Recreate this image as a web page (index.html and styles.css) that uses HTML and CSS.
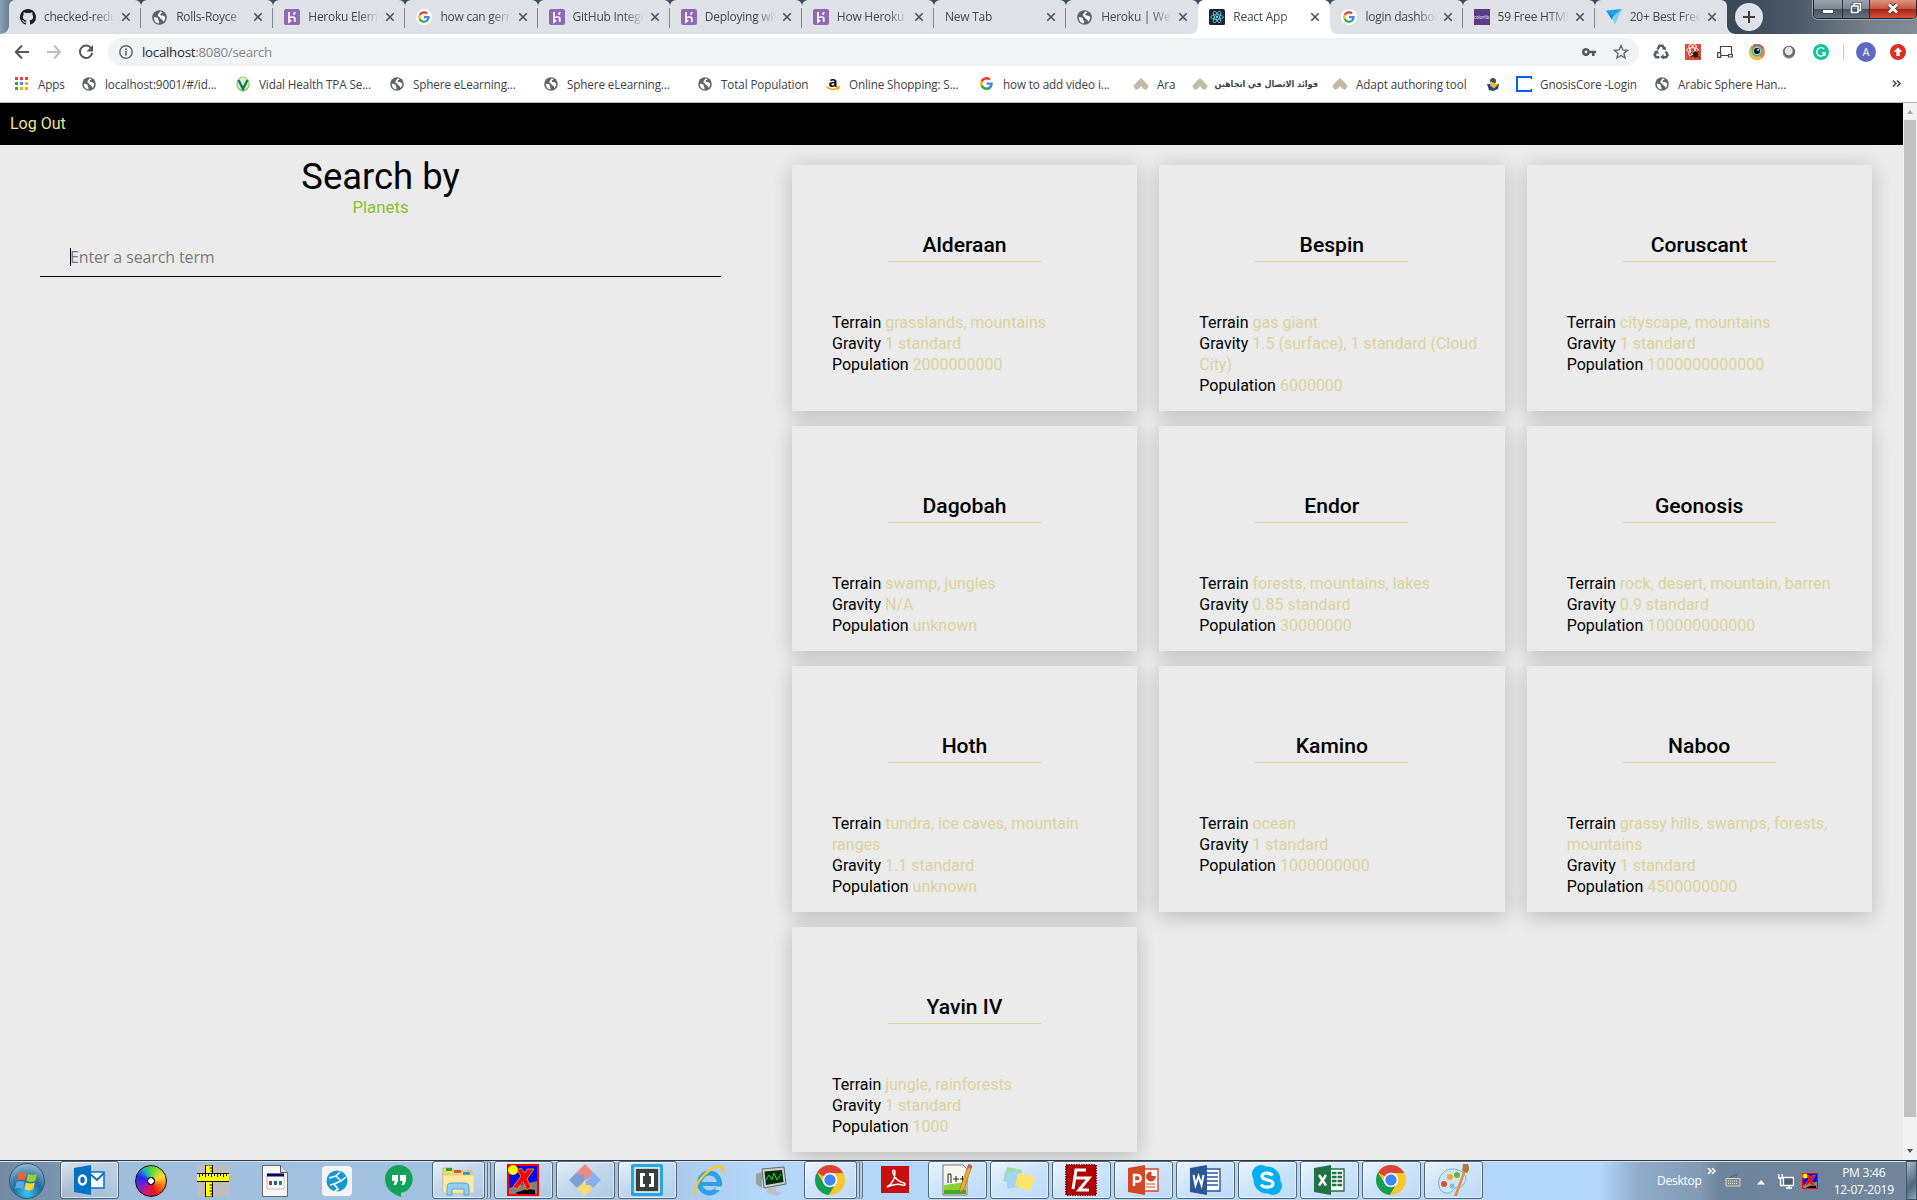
FILE: index.html
```html
<!DOCTYPE html>
<html lang="en">
<head>
<meta charset="utf-8">
<title>React App</title>
<link rel="stylesheet" href="styles.css">
</head>
<body>
<svg class="sprite" width="0" height="0" aria-hidden="true">
  <symbol id="globe" viewBox="0 0 16 16"><circle cx="8" cy="8" r="7.800" fill="#5f6368"/><path d="M2 7.600c1.800 0 3.200.2 4.200 1 .9.800-.2 2 .8 2.700.7.500.6 1.600.4 2.900C4.300 14 2 11.500 2 7.600zM8.300 1.800c1.200-.2 1.700 0 2.800.6-.3 1.100-1.900 1-2.300 2-.3 1 .9 1.500 2.200 1.400 1.300 0 1.500 1.100 3 1.300.2 2.400-.8 4.300-2.300 5.500-.2-1.200-.3-2.500-1.700-2.900-1.600-.4-1-2.200-2.500-2.600C6.300 6.700 6 6.200 6.400 4.800c.3-1.100 1.700-1.400 1.900-3z" fill="#fff"/></symbol>
  <symbol id="google" viewBox="0 0 48 48"><path fill="#EA4335" d="M24 9.500c3.500 0 6.700 1.200 9.200 3.600l6.900-6.900C35.900 2.400 30.500 0 24 0 14.600 0 6.500 5.400 2.600 13.200l8 6.200C12.400 13.700 17.700 9.500 24 9.500z"/><path fill="#4285F4" d="M47 24.600c0-1.600-.2-3.100-.4-4.600H24v9h12.900c-.6 3-2.200 5.500-4.700 7.200l7.700 6C44.400 38 47 32 47 24.600z"/><path fill="#FBBC05" d="M10.500 28.600a14.500 14.500 0 0 1 0-9.200l-8-6.200a24 24 0 0 0 0 21.600z"/><path fill="#34A853" d="M24 48c6.500 0 11.900-2.100 15.900-5.800l-7.700-6c-2.200 1.500-4.900 2.300-8.200 2.300-6.300 0-11.600-4.200-13.500-9.900l-8 6.200C6.500 42.600 14.600 48 24 48z"/></symbol>
  <symbol id="heroku" viewBox="0 0 16 16"><rect width="16" height="16" rx="2" fill="#9268b4"/><path d="M5 3v5.800c1.800-.9 5.800-1.500 5.800.7V13M5 10.500V13l1.500-1.200zM10.800 3c0 1.100-.5 2-1.200 2.700" fill="none" stroke="#fff" stroke-width="1.700"/></symbol>
  <symbol id="github" viewBox="0 0 16 16"><path fill="#1b1f23" fill-rule="evenodd" d="M8 0C3.580 0 0 3.580 0 8c0 3.540 2.290 6.530 5.470 7.590.4.070.55-.17.55-.38 0-.19-.01-.82-.01-1.490-2.010.37-2.530-.49-2.690-.94-.09-.23-.48-.94-.82-1.130-.28-.15-.68-.52-.01-.53.63-.01 1.080.58 1.230.82.72 1.210 1.870.87 2.330.66.07-.52.28-.87.51-1.070-1.780-.2-3.640-.89-3.640-3.950 0-.87.31-1.590.82-2.150-.08-.2-.36-1.020.08-2.120 0 0 .67-.21 2.200.82a7.600 7.600 0 0 1 4 0c1.530-1.040 2.200-.82 2.200-.82.44 1.100.16 1.920.08 2.120.51.56.82 1.270.82 2.150 0 3.070-1.870 3.750-3.650 3.950.29.25.54.73.54 1.480 0 1.070-.01 1.930-.01 2.200 0 .21.15.46.55.38A8 8 0 0 0 16 8c0-4.420-3.580-8-8-8z"/></symbol>
  <symbol id="react" viewBox="0 0 16 16"><rect width="16" height="16" rx="1.500" fill="#20232a"/><g fill="none" stroke="#61dafb" stroke-width=".8"><ellipse cx="8" cy="8" rx="6.300" ry="2.400"/><ellipse cx="8" cy="8" rx="6.300" ry="2.400" transform="rotate(60 8 8)"/><ellipse cx="8" cy="8" rx="6.300" ry="2.400" transform="rotate(120 8 8)"/></g><circle cx="8" cy="8" r="1.200" fill="#61dafb"/></symbol>
  <symbol id="close" viewBox="0 0 10 10"><path d="M1.300 1.300l7.400 7.400M8.700 1.300L1.300 8.700" stroke="#4d5156" stroke-width="1.600"/></symbol>
  <symbol id="adapt" viewBox="0 0 16 14"><path d="M8 1l4 3.800 3.700 4.400L13 13l-3-1.500L8 9l-2 2.500L3 13 .3 9.200 4 4.800z" fill="#c3b9a4"/></symbol>
  <symbol id="chrome" viewBox="0 0 32 32"><circle cx="16" cy="16" r="15" fill="#fbc52d"/><path d="M16 16L3 8.500A15 15 0 0 1 29 8.500L29.300 9H16z" fill="#db4437"/><path d="M3 8.500A15 15 0 0 0 14.700 30.900L21.800 19.500 16 16 9.800 19.500z" fill="#109d58"/><circle cx="16" cy="16" r="7.300" fill="#fff"/><circle cx="16" cy="16" r="5.700" fill="#4285f4"/></symbol>
  <symbol id="runner" viewBox="0 0 32 32"><rect x="1" y="1" width="30" height="30" fill="#0008f0" stroke="#f00" stroke-width="2"/><path d="M2 24l28-7v13H2z" fill="#808080"/><circle cx="6" cy="6" r="5" fill="#ff0"/><path d="M8 29l12-4 8 1v4H12z" fill="#000"/><path d="M20 5h7l-7 10 4 8-4 3-4-8-6 7-4-2 8-11-4-6 4-2 4 5z" fill="#f00" stroke="#d9c000" stroke-width=".8"/></symbol>
</svg>

<div class="screen">
  <div class="tabstrip">
    <div class="tab first"><svg class="fav"><use href="#github"/></svg><span class="tab-title">checked-redux</span><svg class="x"><use href="#close"/></svg></div>
    <div class="tab"><svg class="fav globe"><use href="#globe"/></svg><span class="tab-title">Rolls-Royce</span><svg class="x"><use href="#close"/></svg></div>
    <div class="tab"><svg class="fav"><use href="#heroku"/></svg><span class="tab-title">Heroku Eleme</span><svg class="x"><use href="#close"/></svg></div>
    <div class="tab"><svg class="fav disc"><use href="#google"/></svg><span class="tab-title">how can gerrit</span><svg class="x"><use href="#close"/></svg></div>
    <div class="tab"><svg class="fav"><use href="#heroku"/></svg><span class="tab-title">GitHub Integr</span><svg class="x"><use href="#close"/></svg></div>
    <div class="tab"><svg class="fav"><use href="#heroku"/></svg><span class="tab-title">Deploying with</span><svg class="x"><use href="#close"/></svg></div>
    <div class="tab"><svg class="fav"><use href="#heroku"/></svg><span class="tab-title">How Heroku W</span><svg class="x"><use href="#close"/></svg></div>
    <div class="tab"><span class="tab-title">New Tab</span><svg class="x"><use href="#close"/></svg></div>
    <div class="tab before-active"><svg class="fav globe"><use href="#globe"/></svg><span class="tab-title">Heroku | Welc</span><svg class="x"><use href="#close"/></svg></div>
    <div class="tab active"><svg class="fav"><use href="#react"/></svg><span class="tab-title">React App</span><svg class="x"><use href="#close"/></svg></div>
    <div class="tab after-active"><svg class="fav disc"><use href="#google"/></svg><span class="tab-title">login dashboa</span><svg class="x"><use href="#close"/></svg></div>
    <div class="tab"><span class="fav colorlib">colorlib</span><span class="tab-title">59 Free HTML</span><svg class="x"><use href="#close"/></svg></div>
    <div class="tab last"><svg class="fav" viewBox="0 0 16 16"><path d="M0 1.500L16 0 8.500 6.500z" fill="#1aa3e8"/><path d="M0 1.500l8.500 5L6 11z" fill="#0f8fd6"/><path d="M16 0L8.500 6.500 6 9l3 6.500z" fill="#7fd3ef"/></svg><span class="tab-title">20+ Best Free</span><svg class="x"><use href="#close"/></svg></div>
    <div class="new-tab"><svg width="14" height="14" viewBox="0 0 14 14"><path d="M7 1v12M1 7h12" stroke="#3c4043" stroke-width="2"/></svg></div>
    <div class="win-controls">
      <span class="min"><svg width="12" height="8" viewBox="0 0 12 8"><rect x=".5" y="3.500" width="11" height="4" fill="#fff" stroke="#444b57"/></svg></span>
      <span class="restore"><svg width="12" height="12" viewBox="0 0 12 12"><path d="M4 3.500V1.500h6.500v7H8.500M1.500 4h6.500v6.500H1.500z" fill="none" stroke="#434a56" stroke-width="3"/><path d="M4 3.500V1.500h6.500v7H8.500M1.500 4h6.500v6.500H1.500z" fill="none" stroke="#fff" stroke-width="1.500"/></svg></span>
      <span class="quit"><svg width="12" height="11" viewBox="0 0 12 11"><path d="M2 1.500l8 8M10 1.500l-8 8" stroke="#57363a" stroke-width="4.500"/><path d="M2 1.500l8 8M10 1.500l-8 8" stroke="#fff" stroke-width="2.600"/></svg></span>
    </div>
  </div>

  <div class="toolbar">
    <span class="nav-btn"><svg width="16" height="16" viewBox="0 0 16 16"><path d="M15 8H2M8 1.500L1.800 8 8 14.500" fill="none" stroke="#55585c" stroke-width="2"/></svg></span>
    <span class="nav-btn"><svg width="16" height="16" viewBox="0 0 16 16"><path d="M1 8h13M8 1.500L14.200 8 8 14.500" fill="none" stroke="#bcbec1" stroke-width="2"/></svg></span>
    <span class="nav-btn"><svg width="16" height="16" viewBox="0 0 16 16"><path d="M13.300 4.300A6.200 6.200 0 1 0 14.200 9" fill="none" stroke="#55585c" stroke-width="2"/><path d="M15 1v6.500H8.500z" fill="#55585c"/></svg></span>
    <div class="omnibox">
      <svg width="14" height="14" viewBox="0 0 14 14"><circle cx="7" cy="7" r="6.200" fill="none" stroke="#5f6368" stroke-width="1.400"/><path d="M7 6v4.500M7 3.300v1.600" stroke="#5f6368" stroke-width="1.600"/></svg>
      <span class="url">localhost<i>:8080/search</i></span>
      <span class="omni-end"><svg width="14" height="8" viewBox="0 0 14 8"><path d="M4 0a4 4 0 1 0 3.800 5.300H10V8h2.500V5.300H14V2.700H7.800A4 4 0 0 0 4 0zm0 2.600a1.400 1.400 0 1 1 0 2.800 1.400 1.400 0 0 1 0-2.800z" fill="#55585c" fill-rule="evenodd"/></svg></span>
      <span class="omni-end"><svg width="16" height="16" viewBox="0 0 16 16"><path d="M8 1.500l1.900 4.400 4.700.4-3.600 3.100 1.100 4.600L8 11.500 3.900 14 5 9.400 1.400 6.300l4.700-.4z" fill="none" stroke="#5f6368" stroke-width="1.300"/></svg></span>
    </div>
    <span class="ext"><svg width="16" height="16" viewBox="0 0 16 16"><g fill="none" stroke="#535d6b" stroke-width="2.500"><path d="M4.500 5.500l2-3.700h3l1.600 2.700"/><path d="M12.800 7.500l1.800 3.300-1.400 2.400H9.500"/><path d="M6.500 13.200H3L1.600 10.800l1.700-3"/></g><path d="M12.800 2.500v4L9 5zM10.500 10v5.600L7.300 13zM.8 7.500L5 6.200l1 4z" fill="#535d6b"/></svg></span>
    <span class="ext"><svg width="16" height="16" viewBox="0 0 16 16"><rect width="16" height="16" fill="#dd4b39"/><g fill="none" stroke="#fff" stroke-width=".9"><ellipse cx="7.500" cy="6" rx="6" ry="2.300"/><ellipse cx="7.500" cy="6" rx="6" ry="2.300" transform="rotate(60 7.500 6)"/><ellipse cx="7.500" cy="6" rx="6" ry="2.300" transform="rotate(120 7.500 6)"/></g><ellipse cx="10.500" cy="10.500" rx="2.600" ry="3.300" fill="#2a1c1a"/><path d="M6 8l9 6M6 13l8-6" stroke="#2a1c1a"/></svg></span>
    <span class="ext"><svg width="16" height="14" viewBox="0 0 16 14"><path d="M3.500 8V1.500h11V9M.7 7.700h3v4.600h-3zM11.500 9.500h3.800V12h-3.800zM4 10.500h7" fill="none" stroke="#444" stroke-width="1.200"/></svg></span>
    <span class="ext"><svg width="16" height="16" viewBox="0 0 16 16"><circle cx="8" cy="8" r="8" fill="#ef7f3c"/><path d="M1 4a8 8 0 0 0 12 10.200L8 9z" fill="#f5bd48"/><path d="M4 1a8 8 0 0 1 11 3L8 8z" fill="#e1523d"/><circle cx="8" cy="7" r="5.500" fill="#43b3a0"/><circle cx="8" cy="7" r="4" fill="#8fd6e6"/><circle cx="8" cy="7" r="3" fill="#111"/><circle cx="9" cy="6" r=".9" fill="#fff"/></svg></span>
    <span class="ext"><svg width="14" height="14" viewBox="0 0 14 14"><circle cx="7" cy="7" r="6.200" fill="#6c6c6c"/><ellipse cx="6.700" cy="6" rx="4" ry="4.300" fill="#e7e7e7"/><path d="M1.500 10A6 6 0 0 0 12 10.500" fill="none" stroke="#aaa"/></svg></span>
    <span class="ext"><svg width="16" height="16" viewBox="0 0 16 16"><circle cx="8" cy="8" r="8" fill="#15c39a"/><path d="M11.200 5.200A4.200 4.200 0 1 0 12 9H9M12 8.500v3.300" fill="none" stroke="#fff" stroke-width="1.400"/></svg></span>
    <span class="divider"></span>
    <span class="avatar">A</span>
    <span class="update"><svg width="16" height="16" viewBox="0 0 16 16"><circle cx="8" cy="8" r="8" fill="#d93025"/><path d="M8 3.500l4.300 4.300H9.700V12H6.300V7.800H3.700z" fill="#fff"/></svg></span>
  </div>

  <div class="bookmarks">
    <span class="bm w67"><svg class="apps" viewBox="0 0 13 13"><path d="M0 0h3v3H0zM5 0h3v3H5zM10 0h3v3h-3z" fill="#ea4335"/><path d="M0 5h3v3H0zM0 10h3v3H0z" fill="#34a853"/><path d="M5 5h3v3H5z" fill="#4285f4"/><path d="M10 5h3v3h-3zM5 10h3v3H5zM10 10h3v3h-3z" fill="#fbac05"/></svg>Apps</span>
    <span class="bm w154"><svg><use href="#globe"/></svg>localhost:9001/#/id...</span>
    <span class="bm w154"><svg class="vidal" viewBox="0 0 14 16"><ellipse cx="7" cy="8" rx="6.700" ry="7.600" fill="#8ccf6c"/><ellipse cx="7" cy="7.500" rx="5.500" ry="6.200" fill="#d9f0c5"/><path d="M2.500 4l4.500 9 4.500-9" fill="none" stroke="#137a5c" stroke-width="2.400"/></svg>Vidal Health TPA Se...</span>
    <span class="bm w154"><svg><use href="#globe"/></svg>Sphere eLearning...</span>
    <span class="bm w154"><svg><use href="#globe"/></svg>Sphere eLearning...</span>
    <span class="bm w128"><svg><use href="#globe"/></svg>Total Population</span>
    <span class="bm w154"><b class="amazon">a<svg viewBox="0 0 14 5"><path d="M.5.8C4 4.300 9 4.300 12 1.700M10 .8l3 .1-.8 2.600" fill="none" stroke="#f90" stroke-width="1.500"/></svg></b>Online Shopping: S...</span>
    <span class="bm w153"><svg class="g"><use href="#google"/></svg>how to add video i...</span>
    <span class="bm w59"><svg class="wide"><use href="#adapt"/></svg>Ara</span>
    <span class="bm w140"><svg class="wide"><use href="#adapt"/></svg><span class="arabic" dir="rtl">فوائد الاتصال في اتجاهين</span></span>
    <span class="bm w154"><svg class="wide"><use href="#adapt"/></svg>Adapt authoring tool</span>
    <span class="bm w30"><svg viewBox="0 0 14 14"><path d="M1 7h12l-1 5-5 2-4-1z" fill="#174a86"/><circle cx="7" cy="4" r="3" fill="#3a4f66"/><path d="M5 4.500l7 3-4 4-4-3z" fill="#f7b52c"/></svg></span>
    <span class="bm w139"><svg class="wide" viewBox="0 0 16 16"><path d="M15.500 3V1H1v14h14.500v-2" fill="none" stroke="#0b5cff" stroke-width="2"/></svg>GnosisCore -Login</span>
    <span class="bm w154"><svg><use href="#globe"/></svg>Arabic Sphere Han...</span>
    <svg class="more" width="9" height="7" viewBox="0 0 9 7"><path d="M1 .5l3 3-3 3M5 .5l3 3-3 3" fill="none" stroke="#4a4d51" stroke-width="1.600"/></svg>
  </div>

  <div class="viewport">
    <div class="page">
      <nav class="navbar"><a>Log Out</a></nav>
      <main class="content">
        <section class="search">
          <h1>Search by</h1>
          <p class="topic">Planets</p>
          <div class="field"><span class="caret"></span><span class="placeholder">Enter a search term</span></div>
        </section>
        <section class="results">
          <article class="card"><h2>Alderaan</h2><p>Terrain <em>grasslands, mountains</em></p><p>Gravity <em>1 standard</em></p><p>Population <em>2000000000</em></p></article>
          <article class="card"><h2>Bespin</h2><p>Terrain <em>gas giant</em></p><p>Gravity <em>1.5 (surface), 1 standard (Cloud City)</em></p><p>Population <em>6000000</em></p></article>
          <article class="card"><h2>Coruscant</h2><p>Terrain <em>cityscape, mountains</em></p><p>Gravity <em>1 standard</em></p><p>Population <em>1000000000000</em></p></article>
          <article class="card"><h2>Dagobah</h2><p>Terrain <em>swamp, jungles</em></p><p>Gravity <em>N/A</em></p><p>Population <em>unknown</em></p></article>
          <article class="card"><h2>Endor</h2><p>Terrain <em>forests, mountains, lakes</em></p><p>Gravity <em>0.85 standard</em></p><p>Population <em>30000000</em></p></article>
          <article class="card"><h2>Geonosis</h2><p>Terrain <em>rock, desert, mountain, barren</em></p><p>Gravity <em>0.9 standard</em></p><p>Population <em>100000000000</em></p></article>
          <article class="card"><h2>Hoth</h2><p>Terrain <em>tundra, ice caves, mountain ranges</em></p><p>Gravity <em>1.1 standard</em></p><p>Population <em>unknown</em></p></article>
          <article class="card"><h2>Kamino</h2><p>Terrain <em>ocean</em></p><p>Gravity <em>1 standard</em></p><p>Population <em>1000000000</em></p></article>
          <article class="card"><h2>Naboo</h2><p>Terrain <em>grassy hills, swamps, forests, mountains</em></p><p>Gravity <em>1 standard</em></p><p>Population <em>4500000000</em></p></article>
          <article class="card"><h2>Yavin IV</h2><p>Terrain <em>jungle, rainforests</em></p><p>Gravity <em>1 standard</em></p><p>Population <em>1000</em></p></article>
        </section>
      </main>
    </div>
    <div class="scrollbar"><span class="arrow up"></span><span class="thumb"></span><span class="arrow down"></span></div>
  </div>

  <div class="taskbar">
    <span class="start"><svg width="38" height="38" viewBox="0 0 38 38"><defs><radialGradient id="orb" cx=".5" cy=".85" r=".8"><stop offset="0" stop-color="#35c8f5"/><stop offset=".5" stop-color="#1b6ea3"/><stop offset="1" stop-color="#8fb0c8"/></radialGradient></defs><circle cx="19" cy="19" r="17.500" fill="url(#orb)" stroke="#2e5875"/><path d="M10.500 11.500q4-2 8 0l-1.600 7q-4-2-8 0z" fill="#f0622d"/><path d="M20 12q4 2.200 9 0l-1.800 7q-4.500 2-8.800-.2z" fill="#9bd02f"/><path d="M8.500 20q4-2 8 0l-1.700 7q-4-2-8 0z" fill="#5aa9ee"/><path d="M18 20.500q4.500 2 8.800 0l-1.700 7q-4.500 2-8.800-.2z" fill="#fcd33c"/></svg></span>
    <span class="slot open"><svg viewBox="0 0 32 32"><path d="M16 8h15v16H16z" fill="#fff" stroke="#0072c6" stroke-width="1.500"/><path d="M16 9l8 7 7-7" fill="none" stroke="#0072c6" stroke-width="2"/><path d="M1 4l17-3v30L1 28z" fill="#0072c6"/><ellipse cx="9.500" cy="16" rx="3.500" ry="4.500" fill="none" stroke="#fff" stroke-width="2.500"/></svg></span>
    <span class="slot"><span class="wheel"></span></span>
    <span class="slot"><svg viewBox="0 0 32 32"><path d="M0 0h32v32H0z" fill="#bdbdbd"/><path d="M8.500 0h7v32h-7zM0 8.500h32v8H0z" fill="#ff0" stroke="#000"/><path d="M0 8.500h32v8H0z" fill="#ff0"/><path d="M0 8.500h32M0 16.500h32M2.500 9v3M5.500 9v2M8.500 9v3M11.500 9v2M14.500 9v3M17.500 9v2M20.500 9v3M23.500 9v2M26.500 9v3M29.500 9v2M15.500 3h-3M15.500 6h-2M15.500 20h-3M15.500 23h-2M15.500 26h-3M15.500 29h-2" stroke="#000" fill="none"/></svg></span>
    <span class="slot"><svg viewBox="0 0 32 32"><path d="M3.500.5h18l7 7v24h-25z" fill="#f6f6f6" stroke="#666"/><path d="M21.500.5v7h7" fill="#ddd" stroke="#555"/><path d="M8 9h17v15H8z" fill="#fff" stroke="#bbb"/><path d="M8 8.500h17v3H8z" fill="#00006e"/><path d="M10 16h3v4h-3z" fill="#a32"/><path d="M15 16h3v4h-3z" fill="#16a"/><path d="M20 16h3v4h-3z" fill="#284"/></svg></span>
    <span class="slot"><svg viewBox="0 0 32 32"><rect x="1" y="1" width="30" height="30" rx="4" fill="#f4f4f4"/><circle cx="16" cy="16" r="10.500" fill="#1698d4"/><path d="M19 7l-4 4 5 5-7 3 4 5-4 3M8 13l7-2M20 16l5-4M13 19l-4 1" fill="none" stroke="#fff" stroke-width="1.600"/></svg></span>
    <span class="slot"><svg viewBox="0 0 32 32"><path d="M16 0a14 14 0 0 1 2 27.800V32c-6-2-16-7-16-18A14 14 0 0 1 16 0z" fill="#12a25a"/><path d="M9 10h6v6l-2 4h-2.500l1.500-4H9zM17 10h6v6l-2 4h-2.500l1.500-4h-3z" fill="#fff"/></svg></span>
    <span class="slot open stack"><svg viewBox="0 0 32 32"><path d="M1 4h9l2 3h18v21H1z" fill="#f4d675" stroke="#c8a544" stroke-width=".7"/><path d="M4 4h6v3H4z" fill="#28a428"/><path d="M12 6h7v3h-7z" fill="#c95b39"/><path d="M21 8h7v3h-7z" fill="#3498ce"/><path d="M1 11h31v18H1z" fill="#fbe9a4" stroke="#d7b85c" stroke-width=".5"/><path d="M5 31v-8q0-4 4-4h14q4 0 4 4v8h-5v-6H10v6z" fill="#8fd0ee" stroke="#5ba6ce"/></svg></span>
    <span class="slot open"><svg><use href="#runner"/></svg></span>
    <span class="slot open"><svg viewBox="0 0 32 32"><path d="M16 0l8 8-4 3 2 3-6 2-8-8z" fill="#f08a84"/><path d="M24 8l8 8-8 8-4-3-3 2-1-6 5-2-1-4z" fill="#86b1ee"/><path d="M8 8l3 3 4-1 1 6-3 4-5 4-8-8z" fill="#7f9fcf"/><path d="M16 16l1 5 4 0 3 3-8 8-8-8 5-4z" fill="#f5dc79"/></svg></span>
    <span class="slot open"><svg viewBox="0 0 32 32"><rect width="32" height="32" rx="2" fill="#2ba4df"/><rect x="4" y="4" width="24" height="24" fill="#3b3f42" stroke="#fff" stroke-width="1.500"/><path d="M14 10.500h-3.500v11H14M18 10.500h3.500v11H18" fill="none" stroke="#fff" stroke-width="3"/></svg></span>
    <span class="slot"><svg viewBox="0 0 32 32"><circle cx="16.500" cy="18" r="10" fill="none" stroke="#2aa2e3" stroke-width="5"/><path d="M9 19h20" stroke="#2aa2e3" stroke-width="4"/><path d="M23 21.500h7V25h-8z" fill="#b7d8fa"/><path d="M3 30C-4 23 19-3 29 2c2 1 1 4 0 6" fill="none" stroke="#f9c62b" stroke-width="2.500"/></svg></span>
    <span class="slot"><svg viewBox="0 0 32 32"><path d="M1 9l6-2v16l-6-4z" fill="#999e9c"/><path d="M7 4l22-2 2 17-22 4z" fill="#cbd0cb" stroke="#666"/><path d="M9.500 6.500L27 5l1.500 12L11 20z" fill="#072a0a"/><path d="M11 15l3-5 3 5 2-7 3 7 4-6" fill="none" stroke="#29d337"/><path d="M13 23l8-1v4l6 2-5 3-11-4z" fill="#bcc0bd"/></svg></span>
    <span class="slot open stack"><svg><use href="#chrome"/></svg></span>
    <span class="slot"><svg viewBox="0 0 32 32"><rect x="2" y="1" width="28" height="27" fill="#c70f10"/><path d="M8 22c5-3 8-9 8-15 0-3-3-2-2 1 2 6 6 9 11 10 2 1 1 3-2 2-5-2-10 0-15 2z" fill="none" stroke="#fff" stroke-width="1.500"/></svg></span>
    <span class="slot open"><svg viewBox="0 0 32 32"><path d="M2 1h20l4 4v26H2z" fill="#f7f7ef" stroke="#777"/><path d="M3 21l22-3v12H3z" fill="#8bd136"/><path d="M3 26h22v4H3z" fill="#44a82c"/><path d="M7 10v9M7 10h3v9M12 15h6M15 12v6M19 15h5M21.500 12v6" stroke="#222" fill="none"/><path d="M28 0l3 2-8 23-4 4 0-5z" fill="#f2a735" stroke="#98611b" stroke-width=".6"/><path d="M28 0l3 2-1 3-4-2z" fill="#cc5d57"/></svg></span>
    <span class="slot open"><svg viewBox="0 0 32 32"><path d="M4 3l15 3-3 15-16-4z" fill="#9cdc93"/><path d="M1 9l14-3 5 16-15 3z" fill="#a0d5f4"/><path d="M15 9l17 4-5 14-15-5z" fill="#fce36b"/></svg></span>
    <span class="slot open"><svg viewBox="0 0 32 32"><rect x="1" y="1" width="30" height="30" fill="#b30000" stroke="#8a0000" stroke-width="2" stroke-dasharray="1.500 1"/><path d="M8 25L11 6h10M9 14h9M15 14h9L14 26h10" fill="none" stroke="#fff" stroke-width="3"/></svg></span>
    <span class="slot open"><svg viewBox="0 0 32 32"><path d="M17 5h14v22H17z" fill="#fff" stroke="#d24726" stroke-width="1.400"/><path d="M24 8a4.500 4.500 0 1 0 4.500 4.500H24zM19 20h9M19 23h9" fill="#d24726" stroke="#d24726"/><path d="M1 4l17-3v30L1 28z" fill="#d24726"/><path d="M7 22V11h3.500a3 3 0 0 1 0 6.500H7" fill="none" stroke="#fff" stroke-width="2.400"/></svg></span>
    <span class="slot open"><svg viewBox="0 0 32 32"><path d="M17 5h14v22H17z" fill="#fff" stroke="#2b579a" stroke-width="1.400"/><path d="M18 9h11M18 13h11M18 17h11M18 21h11" stroke="#2b579a" stroke-width="1.500"/><path d="M1 4l17-3v30L1 28z" fill="#2b579a"/><path d="M4.500 11l2 10 3-9 3 9 2-10" fill="none" stroke="#fff" stroke-width="2"/></svg></span>
    <span class="slot open"><svg viewBox="0 0 32 32"><circle cx="10" cy="10" r="9" fill="#00aff0"/><circle cx="22" cy="22" r="9" fill="#00aff0"/><circle cx="16" cy="16" r="13.500" fill="#00aff0"/><path d="M21.500 11.500C19 8 10.500 8.500 11 12.500c.5 4.500 11 2.500 11 7 0 4.500-9.500 5-12 1" fill="none" stroke="#fff" stroke-width="3.200"/></svg></span>
    <span class="slot open"><svg viewBox="0 0 32 32"><path d="M17 5h14v22H17z" fill="#fff" stroke="#217346" stroke-width="1.400"/><path d="M19 9h10M19 13h10M19 17h10M19 21h10" stroke="#217346" stroke-width="2.400" stroke-dasharray="4.500 1"/><path d="M1 4l17-3v30L1 28z" fill="#217346"/><path d="M6 11l7 10.500M13 11L6 21.500" stroke="#fff" stroke-width="2.400"/></svg></span>
    <span class="slot open"><svg><use href="#chrome"/></svg></span>
    <span class="slot open"><svg viewBox="0 0 32 32"><path d="M17 5C7 4 0 13 2 22c1 8 11 9 14 4 2-4 5-1 9-4 6-5 6-15-8-17z" fill="#cfe6f2" stroke="#85aabe"/><circle cx="13" cy="13" r="3" fill="#f6a72c"/><circle cx="7" cy="20" r="3" fill="#e14a2f"/><circle cx="20" cy="11" r="3" fill="#58b947"/><circle cx="15" cy="22" r="2.500" fill="#8bb9d3"/><path d="M27 5l2 2-9 25-3 0z" fill="#df9144"/><path d="M26 0h5l2 5-3 4-5-2z" fill="#b27b3c"/></svg></span>
    <span class="tray">
      <span class="desktop">Desktop</span>
      <svg class="chev" width="9" height="6" viewBox="0 0 9 6"><path d="M1 0l3 3-3 3M5 0l3 3-3 3" fill="none" stroke="#fff" stroke-width="1.500"/></svg>
      <svg class="kbd" width="16" height="14" viewBox="0 0 16 14"><path d="M1 5.500h14v7.500H1z" fill="#85888a" stroke="#d7d2c9"/><path d="M3 8h10M3 10.500h10" stroke="#eee" stroke-dasharray="1 1"/><path d="M5 5c0-3 6-1 8-4" fill="none" stroke="#555"/></svg>
      <svg class="tri" width="8" height="5" viewBox="0 0 8 5"><path d="M4 0l4 4.500H0z" fill="#fff"/></svg>
      <svg class="net" width="16" height="16" viewBox="0 0 16 16"><path d="M5.500 4.500h10v8h-10zM8 15h6M11 13v2" fill="#4d5e70" stroke="#fff" stroke-width="1.300"/><path d="M.7 1v4h3.500V1M2.500 5v7.500h3" fill="none" stroke="#fff" stroke-width="1.300"/></svg>
      <svg class="run" width="16" height="16"><use href="#runner"/></svg>
      <span class="clock"><span>PM 3:46</span><span>12-07-2019</span></span>
      <span class="show-desktop"></span>
    </span>
  </div>
</div>
</body>
</html>
```
FILE: styles.css
```css
* { box-sizing: border-box; }
body { margin: 0; overflow: hidden; font-family: "Open Sans", sans-serif; }
svg { display: block; flex: none; }
.sprite { position: absolute; }
.screen { width: 1917px; height: 1200px; display: flex; flex-direction: column; }

/* tab strip */
.tabstrip {
  height: 34px; flex: none; display: flex; padding-left: 9px; position: relative; z-index: 0;
  background: linear-gradient(90deg, #8aa3b8 0, #5e7284 12px, #3d4a59 60px, #3c4959 1740px, #4a5766 1790px, #76818c 1870px, #828c95 100%);
}
.tab {
  width: 132.15px; flex: none; height: 34px; display: flex; align-items: center; padding: 0 10px 0 11px;
  background: #dee1e6; border-radius: 6px 6px 0 0; position: relative; font-size: 12px; color: #45494d;
}
.tab:not(.active):not(.before-active):not(.last)::after {
  content: ""; position: absolute; right: 0; top: 8px; width: 1px; height: 20px; background: #80868b;
}
.fav { width: 16px; height: 16px; margin-right: 8px; flex: none; }
.fav.globe { width: 15px; height: 15px; margin-right: 9px; }
.fav.disc { background: #fff; border-radius: 50%; padding: 2px; }
.fav.colorlib { background: #5d3a87; color: #fff; font-size: 4.5px; line-height: 16px; text-align: center; overflow: hidden; }
.tab-title {
  flex: 1; overflow: hidden; white-space: nowrap; letter-spacing: -.25px; margin-right: 6px; line-height: 18px;
  -webkit-mask-image: linear-gradient(90deg, #000 calc(100% - 20px), transparent);
  mask-image: linear-gradient(90deg, #000 calc(100% - 20px), transparent);
}
.tab .x { width: 10px; height: 10px; }
.active { background: #fff; }
.active::before { content: ""; position: absolute; z-index: -1; left: -8px; right: -8px; bottom: 0; height: 10px; background: #fff; }
.before-active { border-bottom-right-radius: 8px; }
.after-active { border-bottom-left-radius: 8px; }
.first::before, .last::before {
  content: ""; position: absolute; bottom: 0; width: 8px; height: 8px;
}
.first::before { left: -8px; background: radial-gradient(circle at 0 0, transparent 7.5px, #dee1e6 8px); }
.last::before { right: -8px; background: radial-gradient(circle at 100% 0, transparent 7.5px, #dee1e6 8px); }
.new-tab { width: 28px; height: 28px; margin: 3px 0 0 8px; border-radius: 50%; background: #dee1e6; display: grid; place-items: center; }
.win-controls { margin-left: auto; display: flex; height: 19px; border: 1px solid #1f2833; border-top: 0; border-radius: 0 0 5px 5px; overflow: hidden; box-shadow: 0 0 0 1px #9aa4ae; }
.win-controls span { display: grid; place-items: center; padding-bottom: 2px; background: linear-gradient(#9aa3ad, #7b8793 50%, #47525f 51%, #657280); }
.win-controls .min { width: 29px; border-right: 1px solid #2b3440; padding-top: 4px; }
.win-controls .restore { width: 27px; border-right: 1px solid #2b3440; }
.win-controls .quit { width: 46px; background: linear-gradient(#dc9683, #c8563f 48%, #a82412 52%, #d2543a); }

/* toolbar */
.toolbar { height: 36px; flex: none; display: flex; align-items: center; padding-left: 6px; background: #fff; }
.nav-btn { width: 32px; display: grid; place-items: center; }
.omnibox { width: 1531px; height: 28px; margin-left: 6px; border-radius: 14px; background: #f1f3f4; display: flex; align-items: center; padding: 0 2px 0 11px; }
.url { margin-left: 9px; flex: 1; font-size: 13.3px; line-height: 18px; letter-spacing: -.27px; color: #25282b; }
.url i { font-style: normal; color: #80868b; }
.omni-end { width: 32px; display: grid; place-items: center; }
.ext { width: 32px; display: grid; place-items: center; }
.omnibox + .ext { margin-left: 6px; }
.divider { width: 1px; height: 16px; background: #c6c9cc; margin: 0 12px 0 6px; }
.avatar { width: 20px; height: 20px; border-radius: 50%; background: #5c6bc0; color: #fff; font-size: 11px; line-height: 20px; text-align: center; }
.update { margin-left: 14px; }

/* bookmarks */
.bookmarks { height: 33px; flex: none; display: flex; align-items: center; padding: 0 16px 5px 15px; background: #fff; border-bottom: 1px solid #b6b6b6; font-size: 11.7px; line-height: 16px; letter-spacing: -.12px; color: #3d4145; white-space: nowrap; }
.bm { display: flex; align-items: center; flex: none; height: 16px; }
.bm > svg { width: 14px; height: 14px; margin-right: 9px; }
.bm > .apps { width: 13px; height: 13px; margin-right: 10px; }
.bm > .vidal { height: 16px; }
.bm > .g { width: 13px; height: 13px; margin-right: 10px; }
.bm > .wide { width: 16px; height: 16px; margin-right: 8px; }
.amazon { width: 14px; margin-right: 9px; font: bold 15px/9px "Open Sans", sans-serif; color: #111; text-align: center; }
.amazon svg { width: 14px; height: 5px; }
.arabic { font: bold 9px "DejaVu Sans Condensed", "DejaVu Sans", sans-serif; font-stretch: condensed; letter-spacing: 0; width: 102px; }
.w30 { width: 30px; } .w59 { width: 59px; } .w67 { width: 67px; } .w128 { width: 128px; }
.w139 { width: 139px; } .w140 { width: 140px; } .w153 { width: 153px; } .w154 { width: 154px; }
.more { margin-left: auto; }

/* page */
.viewport { height: 1057px; flex: none; display: flex; overflow: hidden; }
.page { width: 1903px; background: #ebebeb; font-family: Roboto, sans-serif; font-size: 16px; color: #000; }
.navbar { height: 42px; background: #000; padding: 11px 10px; line-height: 20px; color: #f0e68c; }
.content { display: flex; }
.search { width: 761px; padding: 11px 40px 0; text-align: center; }
h1 { margin: 0; font-size: 36.4px; font-weight: 400; line-height: 42px; }
.topic { margin: 0; font-size: 16.8px; line-height: 19px; color: #86c232; }
.field { margin-top: 21px; height: 39px; padding: 8px 30px; border-bottom: 1px solid #000; display: flex; text-align: left; font: 16px/22px "Open Sans", sans-serif; letter-spacing: -.12px; color: #7a7a7a; }
.caret { width: 1px; height: 18px; margin: 2px -1px 0 0; background: #000; }
.results { margin: 20px 0 0 31px; width: 1080px; display: grid; grid-template-columns: repeat(3, 1fr); gap: 15px 22px; align-items: stretch; }
.card { padding: 65px 22px 15px 40px; background: #ebebeb; box-shadow: 0 0 20px rgba(0,0,0,.08), 0 6px 20px rgba(0,0,0,.14); }
.card h2 { width: 153px; margin: 0 0 50px 56px; padding-bottom: 1px; border-bottom: 1px solid #d9d49b; text-align: center; font-size: 21.1px; font-weight: 500; line-height: 30px; }
.card p { margin: 0; line-height: 21px; }
.card em { font-style: normal; color: #dad49c; }
.scrollbar { width: 14px; background: #f1f1f1; display: flex; flex-direction: column; align-items: center; }
.arrow { width: 0; height: 0; border: 3.5px solid transparent; }
.up { border-top: 0; border-bottom: 4px solid #a3a3a3; margin: 7px 0 6px; }
.down { border-bottom: 0; border-top: 4px solid #505050; margin-top: auto; margin-bottom: 7px; }
.thumb { width: 12px; height: 997px; background: #c1c1c1; }

/* taskbar */
.taskbar {
  height: 40px; flex: none; display: flex; border-top: 1px solid #2c3a47;
  box-shadow: inset 0 1px #d4e4f2;
  background: linear-gradient(90deg, #7389a2 0, #7c93ae 56px, #a0bedc 120px, #a4c3e3 620px, #b4d6f8 760px, #b4d6f8 1600px, #8eaac6 1640px, #839bb5 1700px, #6e849c 1720px, #71869c 1917px);
}
.start { width: 58px; display: grid; place-items: center; padding-right: 4px; }
.slot { width: 62px; display: grid; place-items: center; }
.slot svg { width: 32px; height: 32px; }
.slot.open { width: 59px; height: 38px; margin: 0 1.5px; border: 1px solid #516679; border-radius: 3px; background: linear-gradient(150deg, rgba(255,255,255,.75), rgba(255,255,255,.35) 45%, rgba(255,255,255,.12)); box-shadow: inset 0 0 0 1px rgba(255,255,255,.55); }
.slot.stack { width: 53px; margin-right: 7.5px; box-shadow: inset 0 0 0 1px rgba(255,255,255,.55), 2px 0 #b7cce2, 3px 0 #5f7488, 5px 0 #b7cce2, 6px 0 #5f7488; }
.wheel { width: 32px; height: 32px; border-radius: 50%; border: 1.5px solid #111; background: radial-gradient(circle, #fff 0 2.5px, #222 3px 4px, transparent 4.5px), conic-gradient(#4fd93b, #ffd92e 70deg, #ff7a1a 110deg, #e81818 160deg, #d01674 205deg, #7a1fd0 245deg, #2525f0 290deg, #16a5d0 325deg, #4fd93b); }
.tray { margin-left: auto; width: 260px; display: flex; align-items: center; color: #fff; font-size: 12px; letter-spacing: -.25px; }
.desktop { width: 51px; }
.chev { margin-bottom: 20px; margin-right: 9px; }
.kbd { margin-right: 16px; margin-bottom: 2px; }
.tri { margin-right: 13px; margin-top: 4px; }
.net { margin-right: 8px; }
.run { margin-right: 3px; }
.clock { width: 86px; display: flex; flex-direction: column; align-items: center; line-height: 17px; }
.show-desktop { width: 11px; height: 39px; margin-left: auto; border: 1px solid #42566a; background: linear-gradient(135deg, #a9bccd, #50677e 60%, #8da5bb); }
```
